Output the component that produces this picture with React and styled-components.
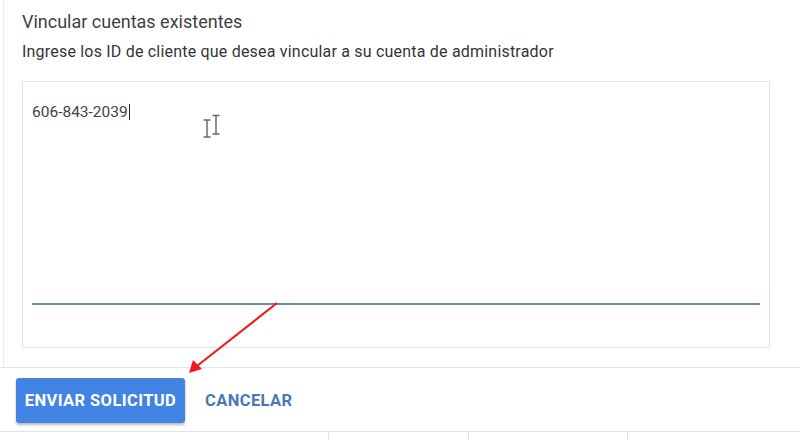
import React from "react";
import styled, { createGlobalStyle } from "styled-components";

const Global = createGlobalStyle`
  html, body { margin: 0; padding: 0; background: #fff; }
  body { font-family: Roboto, "Noto Sans", Arial, sans-serif; }
`;

const Page = styled.div`
  position: relative;
  width: 800px;
  height: 440px;
  overflow: hidden;
  background: #fff;
  display: flex;
  flex-direction: column;
  & > * { flex: none; }
`;

const Panel = styled.div`
  margin-left: 3px;
  border-left: 1px solid #ececec;
  padding: 10px 30px 0 18px;
  height: 367px;
  box-sizing: border-box;
  display: flex;
  flex-direction: column;
`;

const Title = styled.h2`
  margin: 0;
  font-size: 18px;
  font-weight: 400;
  color: #3f3f3f;
  line-height: 24px;
`;

const Subtitle = styled.p`
  margin: 8px 0 0;
  font-size: 16px;
  letter-spacing: 0.2px;
  color: #353535;
  line-height: 20px;
  white-space: nowrap;
`;

const Box = styled.div`
  position: relative;
  margin-top: 19px;
  width: 748px;
  height: 267px;
  flex: none;
  box-sizing: border-box;
  border: 1px solid #e3e3e3;
  padding: 20px 9px 0 9px;
  display: flex;
  flex-direction: column;
`;

const Entry = styled.div`
  font-size: 15.5px;
  color: #444;
  line-height: 20px;
  display: flex;
  align-items: center;
`;

const Caret = styled.span`
  display: inline-block;
  width: 1px;
  height: 16px;
  background: #222;
  margin-left: 1px;
`;

const Underline = styled.div`
  margin-top: auto;
  margin-bottom: 42px;
  height: 2px;
  background: #62909e;
`;

const Cursor = styled.svg`
  position: absolute;
  left: 179px;
  top: 31px;
`;

const Divider = styled.div`
  height: 1px;
  background: #e6e6e6;
`;

const Footer = styled.div`
  display: flex;
  align-items: flex-start;
  gap: 20px;
  padding: 10px 0 0 16px;
  height: 63px;
  box-sizing: border-box;
`;

const Primary = styled.button`
  width: 169px;
  height: 45px;
  border: none;
  border-radius: 3px;
  background: #4284e3;
  color: #fff;
  font-family: Roboto, Arial, sans-serif;
  font-size: 16.5px;
  font-weight: 700;
  letter-spacing: 0.4px;
  box-shadow: 0 2px 3px rgba(0, 0, 0, 0.28);
  padding: 0;
`;

const TextButton = styled.button`
  height: 45px;
  border: none;
  background: none;
  color: #4b78b5;
  font-family: Roboto, Arial, sans-serif;
  font-size: 16.5px;
  font-weight: 700;
  letter-spacing: 0.4px;
  padding: 0;
`;

const BottomRow = styled.div`
  display: grid;
  grid-template-columns: 329px 140px 159px 1fr;
  border-top: 1px solid #e2e2e2;
  height: 9px;
`;

const Cell = styled.div`
  border-right: ${(p) => (p.$last ? "none" : "1px solid #e2e2e2")};
`;

const Arrow = styled.svg`
  position: absolute;
  left: 0;
  top: 0;
  pointer-events: none;
`;

export default function App() {
  return (
    <>
      <Global />
      <Page>
        <Panel>
          <Title>Vincular cuentas existentes</Title>
          <Subtitle>
            Ingrese los ID de cliente que desea vincular a su cuenta de administrador
          </Subtitle>
          <Box>
            <Entry>
              606-843-2039
              <Caret />
            </Entry>
            <Cursor width="20" height="26" viewBox="0 0 20 26">
              <g stroke="#6a6a6a" strokeWidth="1.5" fill="none">
                <path d="M1.5 7h7M5 7v17M1.5 24h7" />
                <path d="M10.5 2.5h7M14 2.5v18.5M10.5 21h7" />
              </g>
            </Cursor>
            <Underline />
          </Box>
        </Panel>
        <Divider />
        <Footer>
          <Primary>ENVIAR SOLICITUD</Primary>
          <TextButton>CANCELAR</TextButton>
        </Footer>
        <BottomRow>
          <Cell />
          <Cell />
          <Cell />
          <Cell $last />
        </BottomRow>
        <Arrow width="800" height="440" viewBox="0 0 800 440">
          <line x1="277" y1="303" x2="197" y2="366" stroke="#ee1c1c" strokeWidth="2.2" />
          <polygon points="189,373 193,360 202,369" fill="#ee1c1c" />
        </Arrow>
      </Page>
    </>
  );
}
